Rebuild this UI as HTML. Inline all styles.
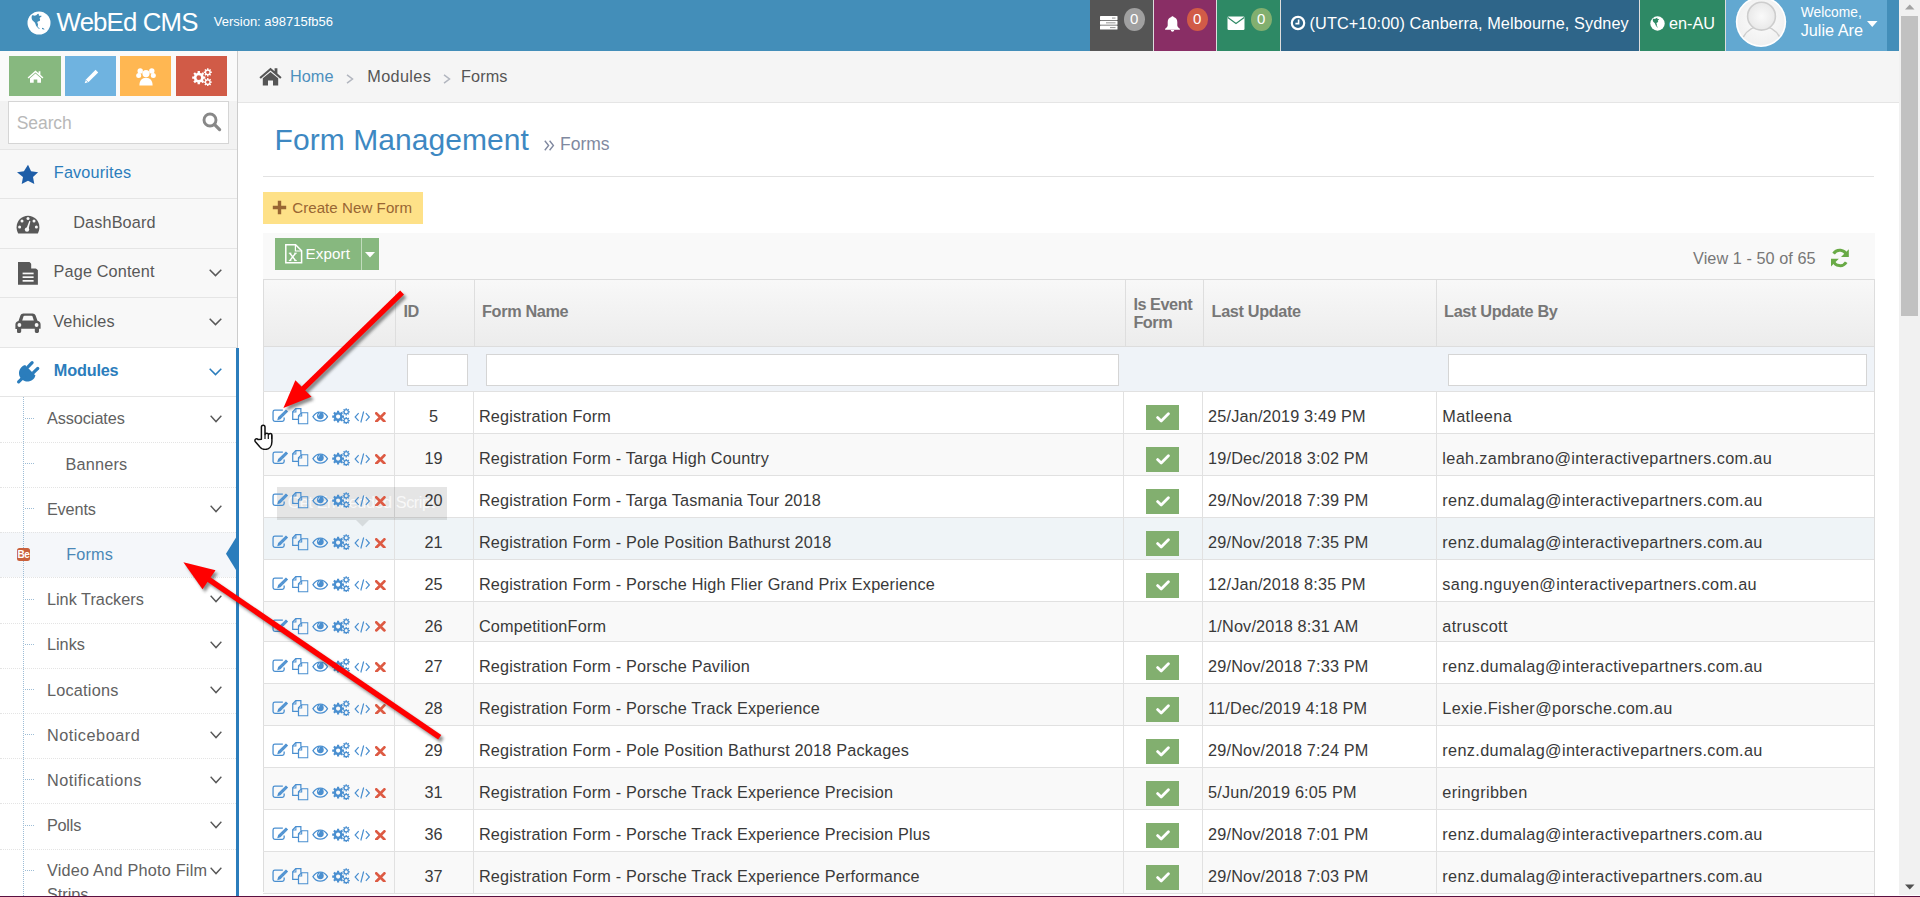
<!DOCTYPE html><html><head><meta charset="utf-8"><title>Forms</title><style>
*{margin:0;padding:0;box-sizing:border-box}
html,body{width:1920px;height:897px;overflow:hidden;background:#fff;font-family:"Liberation Sans",sans-serif}
.a{position:absolute}
.t{position:absolute;white-space:nowrap;line-height:1.15}
</style></head><body>
<svg width="0" height="0" style="position:absolute">
<defs>
<symbol id="i-edit" viewBox="0 0 16 13"><path d="M10.6 1.2H2.6C1.6 1.2 0.8 2 0.8 3V10.5C0.8 11.5 1.6 12.3 2.6 12.3H10.1C11.1 12.3 11.9 11.5 11.9 10.5V8.6" fill="none" stroke="#4a8fd0" stroke-width="1.3"/><path d="M13.7 0.4L15.9 2.6 8.2 10.3 5 11.2 5.9 8z" fill="#4a8fd0"/><path d="M7 8.2L13.9 1.3M8 9.2L14.9 2.3" stroke="#fff" stroke-width="0.35" stroke-dasharray="0.8 0.8" opacity="0.7"/></symbol>
<symbol id="i-copy" viewBox="0 0 16 16"><path d="M8.6 4.6V0.7H3.6L0.7 3.6V11H6.1" fill="none" stroke="#4a8fd0" stroke-width="1.2"/><path d="M0.7 3.8H3.8V0.7" fill="none" stroke="#4a8fd0" stroke-width="1"/><path d="M15.4 4.6H9.2L6.3 7.5V15.4H15.4z" fill="none" stroke="#4a8fd0" stroke-width="1.2"/><path d="M6.3 7.7H9.4V4.6" fill="none" stroke="#4a8fd0" stroke-width="1"/></symbol>
<symbol id="i-eye" viewBox="0 0 16 11"><path d="M0.7 5.6C2.5 2.6 5 1 8 1s5.5 1.6 7.3 4.6C13.5 8.6 11 10.2 8 10.2S2.5 8.6 0.7 5.6z" fill="none" stroke="#4a8fd0" stroke-width="1.25"/><circle cx="8.1" cy="4.8" r="3.4" fill="#4a8fd0"/><path d="M6.2 4.6C6.2 3.6 6.8 2.9 7.7 2.7" stroke="#fff" stroke-width="0.8" fill="none"/></symbol>
<symbol id="i-cogs" viewBox="0 0 18 16"><path d="M10.47 7.53 L12.01 7.55 L12.01 9.65 L10.47 9.67 L9.95 10.94 L11.02 12.03 L9.53 13.52 L8.44 12.45 L7.17 12.97 L7.15 14.51 L5.05 14.51 L5.03 12.97 L3.76 12.45 L2.67 13.52 L1.18 12.03 L2.25 10.94 L1.73 9.67 L0.19 9.65 L0.19 7.55 L1.73 7.53 L2.25 6.26 L1.18 5.17 L2.67 3.68 L3.76 4.75 L5.03 4.23 L5.05 2.69 L7.15 2.69 L7.17 4.23 L8.44 4.75 L9.53 3.68 L11.02 5.17 L9.95 6.26ZM8.20 8.60A2.1 2.1 0 1 0 4.00 8.60A2.1 2.1 0 1 0 8.20 8.60ZM16.82 3.16 L17.84 3.15 L17.84 4.45 L16.82 4.44 L16.51 5.20 L17.24 5.92 L16.32 6.84 L15.60 6.11 L14.84 6.42 L14.85 7.44 L13.55 7.44 L13.56 6.42 L12.80 6.11 L12.08 6.84 L11.16 5.92 L11.89 5.20 L11.58 4.44 L10.56 4.45 L10.56 3.15 L11.58 3.16 L11.89 2.40 L11.16 1.68 L12.08 0.76 L12.80 1.49 L13.56 1.18 L13.55 0.16 L14.85 0.16 L14.84 1.18 L15.60 1.49 L16.32 0.76 L17.24 1.68 L16.51 2.40ZM15.70 3.80A1.5 1.5 0 1 0 12.70 3.80A1.5 1.5 0 1 0 15.70 3.80ZM16.82 11.96 L17.84 11.95 L17.84 13.25 L16.82 13.24 L16.51 14.00 L17.24 14.72 L16.32 15.64 L15.60 14.91 L14.84 15.22 L14.85 16.24 L13.55 16.24 L13.56 15.22 L12.80 14.91 L12.08 15.64 L11.16 14.72 L11.89 14.00 L11.58 13.24 L10.56 13.25 L10.56 11.95 L11.58 11.96 L11.89 11.20 L11.16 10.48 L12.08 9.56 L12.80 10.29 L13.56 9.98 L13.55 8.96 L14.85 8.96 L14.84 9.98 L15.60 10.29 L16.32 9.56 L17.24 10.48 L16.51 11.20ZM15.70 12.60A1.5 1.5 0 1 0 12.70 12.60A1.5 1.5 0 1 0 15.70 12.60Z" fill="#4a8fd0" fill-rule="evenodd"/></symbol>
<symbol id="i-cogs-w" viewBox="0 0 18 16"><path d="M10.47 7.53 L12.01 7.55 L12.01 9.65 L10.47 9.67 L9.95 10.94 L11.02 12.03 L9.53 13.52 L8.44 12.45 L7.17 12.97 L7.15 14.51 L5.05 14.51 L5.03 12.97 L3.76 12.45 L2.67 13.52 L1.18 12.03 L2.25 10.94 L1.73 9.67 L0.19 9.65 L0.19 7.55 L1.73 7.53 L2.25 6.26 L1.18 5.17 L2.67 3.68 L3.76 4.75 L5.03 4.23 L5.05 2.69 L7.15 2.69 L7.17 4.23 L8.44 4.75 L9.53 3.68 L11.02 5.17 L9.95 6.26ZM8.20 8.60A2.1 2.1 0 1 0 4.00 8.60A2.1 2.1 0 1 0 8.20 8.60ZM16.82 3.16 L17.84 3.15 L17.84 4.45 L16.82 4.44 L16.51 5.20 L17.24 5.92 L16.32 6.84 L15.60 6.11 L14.84 6.42 L14.85 7.44 L13.55 7.44 L13.56 6.42 L12.80 6.11 L12.08 6.84 L11.16 5.92 L11.89 5.20 L11.58 4.44 L10.56 4.45 L10.56 3.15 L11.58 3.16 L11.89 2.40 L11.16 1.68 L12.08 0.76 L12.80 1.49 L13.56 1.18 L13.55 0.16 L14.85 0.16 L14.84 1.18 L15.60 1.49 L16.32 0.76 L17.24 1.68 L16.51 2.40ZM15.70 3.80A1.5 1.5 0 1 0 12.70 3.80A1.5 1.5 0 1 0 15.70 3.80ZM16.82 11.96 L17.84 11.95 L17.84 13.25 L16.82 13.24 L16.51 14.00 L17.24 14.72 L16.32 15.64 L15.60 14.91 L14.84 15.22 L14.85 16.24 L13.55 16.24 L13.56 15.22 L12.80 14.91 L12.08 15.64 L11.16 14.72 L11.89 14.00 L11.58 13.24 L10.56 13.25 L10.56 11.95 L11.58 11.96 L11.89 11.20 L11.16 10.48 L12.08 9.56 L12.80 10.29 L13.56 9.98 L13.55 8.96 L14.85 8.96 L14.84 9.98 L15.60 10.29 L16.32 9.56 L17.24 10.48 L16.51 11.20ZM15.70 12.60A1.5 1.5 0 1 0 12.70 12.60A1.5 1.5 0 1 0 15.70 12.60Z" fill="#fff" fill-rule="evenodd"/></symbol>
<symbol id="i-code" viewBox="0 0 16 12"><path d="M4.4 2.2L0.9 6l3.5 3.8M11.6 2.2L15.1 6l-3.5 3.8M9.4 0.5L6.6 11.5" fill="none" stroke="#4a8fd0" stroke-width="1.2"/></symbol>
<symbol id="i-x" viewBox="0 0 11 11"><path d="M1.4 1.4L9.6 9.6M9.6 1.4L1.4 9.6" stroke="#dd5a43" stroke-width="2.8" stroke-linecap="square"/></symbol>
<symbol id="i-chev" viewBox="0 0 13 8"><path d="M0.7 0.7L6.5 6.6 12.3 0.7" fill="none" stroke="#585858" stroke-width="1.5"/></symbol>
<symbol id="i-check" viewBox="0 0 14 11"><path d="M1.6 5.6L5.2 9 12.4 1.8" fill="none" stroke="#fff" stroke-width="2.8" stroke-linecap="round" stroke-linejoin="round"/></symbol>
</defs></svg>
<div class="a" style="left:0px;top:0px;width:1899px;height:51px;background:#438eb9"></div>
<svg class="a" style="left:27px;top:11px;" width="24" height="24" viewBox="0 0 24 24"><circle cx="12" cy="12" r="11.5" fill="#fff"/><path d="M5 4.5c1.5-0.5 2.5 0.5 3.5 0 1-0.3 1.5-1.5 3-1.8 0.8 0.5-0.2 1.5 0.6 2 1 0.4 1.8-0.4 2.6 0.3-0.3 1-1.6 1-2 2-0.2 1 0.8 1.6 0.3 2.5-0.6 1-2 0.6-2.6 1.5-0.3 0.8 0.6 1.6 0.6 2.5 0.1 0.8-0.5 1.4-0.2 2.2 0.4 0.9 1.6 1.3 2 2.2-1.2-0.2-2-1.2-2.8-2-0.9-0.9-1.3-2-1.6-3.2C7.8 11 6.3 10.4 5.4 9.3 4.6 8.2 4.3 6 5 4.5zM15 16.8c1.2 0.1 2 0.8 2.6 1.5-0.8 0.3-1.8 0.2-2.6-0.3z" fill="#438eb9"/></svg>
<div class="t " style="left:56.60px;top:8.13px;font-size:25.8px;color:#fff;font-weight:normal;letter-spacing:-0.85px">WebEd CMS</div>
<div class="t " style="left:213.75px;top:14.82px;font-size:13px;color:#fff;font-weight:normal;">Version: a98715fb56</div>
<div class="a" style="left:1090px;top:0px;width:63px;height:51px;background:#555"></div>
<div class="a" style="left:1153px;top:0px;width:1px;height:51px;background:#ddd"></div>
<div class="a" style="left:1154px;top:0px;width:62px;height:51px;background:#892e65"></div>
<div class="a" style="left:1216px;top:0px;width:1px;height:51px;background:#ddd"></div>
<div class="a" style="left:1217px;top:0px;width:63px;height:51px;background:#2e8965"></div>
<div class="a" style="left:1280px;top:0px;width:1px;height:51px;background:#ddd"></div>
<div class="a" style="left:1281px;top:0px;width:358px;height:51px;background:#2e6589"></div>
<div class="a" style="left:1639px;top:0px;width:1px;height:51px;background:#ddd"></div>
<div class="a" style="left:1640px;top:0px;width:85px;height:51px;background:#2e8965"></div>
<div class="a" style="left:1725px;top:0px;width:1px;height:51px;background:#ddd"></div>
<div class="a" style="left:1726px;top:0px;width:161px;height:51px;background:#62a8d1"></div>
<svg class="a" style="left:1100px;top:16px;" width="18" height="14" viewBox="0 0 18 14"><g fill="#fff"><rect x="0" y="0" width="17.5" height="4" rx="0.6"/><rect x="0" y="4.8" width="17.5" height="4" rx="0.6"/><rect x="0" y="9.6" width="17.5" height="4" rx="0.6"/></g><g fill="#888"><rect x="12" y="1.6" width="3.5" height="0.9"/><rect x="6" y="6.4" width="9.5" height="0.9"/><rect x="10" y="11.2" width="5.5" height="0.9"/></g></svg>
<div class="a" style="left:1123.7px;top:7.8px;width:21.4px;height:23px;background:#a0a0a0;border-radius:50%"></div>
<div class="t " style="left:1130.00px;top:10.38px;font-size:15px;color:#fff;font-weight:normal;">0</div>
<div class="a" style="left:1186.8px;top:7.8px;width:21.4px;height:23px;background:#d15b47;border-radius:50%"></div>
<div class="t " style="left:1193.10px;top:10.38px;font-size:15px;color:#fff;font-weight:normal;">0</div>
<div class="a" style="left:1250.8px;top:7.8px;width:21.4px;height:23px;background:#82af6f;border-radius:50%"></div>
<div class="t " style="left:1257.10px;top:10.38px;font-size:15px;color:#fff;font-weight:normal;">0</div>
<svg class="a" style="left:1164px;top:15px;" width="17" height="17" viewBox="0 0 17 17"><path d="M8.5 1.2c0.7 0 1.1 0.4 1.1 0.9 2.4 0.5 3.7 2.4 3.7 5v3.2c0 1.4 1 2.3 2.6 3.5v0.9H1.1v-0.9c1.6-1.2 2.6-2.1 2.6-3.5V7.1c0-2.6 1.3-4.5 3.7-5 0-0.5 0.4-0.9 1.1-0.9zM6.8 15.1h3.4c0 1-0.8 1.7-1.7 1.7s-1.7-0.7-1.7-1.7z" fill="#fff"/></svg>
<svg class="a" style="left:1227px;top:16px;" width="18" height="15" viewBox="0 0 18 15"><rect x="0.5" y="0.5" width="17" height="13.5" rx="1.2" fill="#fff"/><path d="M0.8 1.5L9 7.5 17.2 1.5" fill="none" stroke="#2e8965" stroke-width="1.1"/></svg>
<svg class="a" style="left:1290px;top:15px;" width="16" height="16" viewBox="0 0 16 16"><circle cx="8" cy="8" r="6.2" fill="none" stroke="#fff" stroke-width="2.2"/><path d="M8.6 4.5V8.6H5.4" fill="none" stroke="#fff" stroke-width="1.6"/></svg>
<div class="t " style="left:1309.60px;top:14.23px;font-size:16.25px;color:#fff;font-weight:normal;letter-spacing:0.09px">(UTC+10:00) Canberra, Melbourne, Sydney</div>
<svg class="a" style="left:1650px;top:15.8px;" width="15" height="15" viewBox="0 0 15 15"><circle cx="7.5" cy="7.5" r="7.2" fill="#fff"/><path d="M3 2.8c1-0.3 1.6 0.3 2.3 0 0.6-0.2 1-1 1.9-1.1 0.5 0.3-0.1 1 0.4 1.3 0.6 0.3 1.1-0.3 1.6 0.2-0.2 0.6-1 0.6-1.3 1.3-0.1 0.6 0.5 1 0.2 1.6-0.4 0.6-1.3 0.4-1.6 1-0.2 0.5 0.4 1 0.4 1.6 0 0.5-0.3 0.9-0.1 1.4 0.3 0.6 1 0.8 1.3 1.4-0.8-0.1-1.3-0.8-1.8-1.3-0.6-0.6-0.8-1.3-1-2C4.8 6.9 3.9 6.5 3.3 5.8 2.8 5.1 2.6 3.8 3 2.8z" fill="#2e8965"/></svg>
<div class="t " style="left:1668.90px;top:14.03px;font-size:16.25px;color:#fff;font-weight:normal;">en-AU</div>
<svg class="a" style="left:1735px;top:-4px;" width="52" height="52" viewBox="0 0 52 52"><defs><radialGradient id="avg" cx="0.5" cy="0.45" r="0.55"><stop offset="0" stop-color="#fdfdfd"/><stop offset="1" stop-color="#f0f0f0"/></radialGradient><radialGradient id="avh" cx="0.5" cy="0.5" r="0.5"><stop offset="0" stop-color="#fafafa"/><stop offset="1" stop-color="#e9e9e9"/></radialGradient><clipPath id="avc"><circle cx="26" cy="25.8" r="23.6"/></clipPath></defs><circle cx="26" cy="25.8" r="25.2" fill="#fff"/><circle cx="26" cy="25.8" r="23.6" fill="url(#avg)"/><g clip-path="url(#avc)"><path d="M8.2 41.2A20.6 20.6 0 0 1 44.8 41.2" fill="none" stroke="#cdcdcd" stroke-width="1.6"/><circle cx="26.5" cy="20.2" r="13.9" fill="url(#avh)" stroke="#cdcdcd" stroke-width="1.6"/></g></svg>
<div class="t " style="left:1800.70px;top:4.78px;font-size:13.8px;color:#fff;font-weight:normal;">Welcome,</div>
<div class="t " style="left:1800.70px;top:21.23px;font-size:16.25px;color:#fff;font-weight:normal;">Julie Are</div>
<svg class="a" style="left:1867px;top:20.8px;" width="11" height="6" viewBox="0 0 11 6"><path d="M0 0H10.5L5.25 6z" fill="#fff"/></svg>
<div class="a" style="left:0px;top:51px;width:237px;height:845px;background:#fff"></div>
<div class="a" style="left:237px;top:51px;width:1px;height:845px;background:#ccc"></div>
<div class="a" style="left:0px;top:51px;width:237px;height:50px;background:#fafafa"></div>
<div class="a" style="left:9px;top:56px;width:52px;height:40px;background:#87b87f"></div>
<div class="a" style="left:65px;top:56px;width:51px;height:40px;background:#6fb3e0"></div>
<div class="a" style="left:120px;top:56px;width:51px;height:40px;background:#ffb752"></div>
<div class="a" style="left:176px;top:56px;width:51px;height:40px;background:#d15b47"></div>
<svg class="a" style="left:27px;top:69.5px;" width="17" height="13" viewBox="0 0 17 13"><path d="M8.5 0.6L0.6 7.4 1.6 8.4 8.5 2.5 15.4 8.4 16.4 7.4 13.4 4.8V1.2H11.6V3.3z" fill="#fff"/><path d="M3 8.2L8.5 3.6 14 8.2V12.8H10.3V9.4H6.7V12.8H3z" fill="#fff"/></svg>
<svg class="a" style="left:82.5px;top:68.5px;" width="16" height="16" viewBox="0 0 16 16"><path d="M12.6 0.8l2.6 2.6-9.6 9.6-3.9 1.3 1.3-3.9z" fill="#fff"/><path d="M3.2 11.3l1.5 1.5" stroke="#6fb3e0" stroke-width="0.9"/></svg>
<svg class="a" style="left:136px;top:67px;" width="20" height="19" viewBox="0 0 20 19"><g fill="#fff"><circle cx="4.2" cy="4" r="2.7"/><circle cx="15.8" cy="4" r="2.7"/><circle cx="10" cy="6.6" r="3.6"/><circle cx="2.7" cy="8.6" r="2.5"/><circle cx="17.3" cy="8.6" r="2.5"/><path d="M3.4 18.6c0-5 2.4-7.8 6.6-7.8s6.6 2.8 6.6 7.8z"/></g></svg>
<svg class="a" style="left:192px;top:67.5px;" width="20" height="18" viewBox="0 0 20 18"><use href="#i-cogs-w" width="20" height="18"/></svg>
<div class="a" style="left:0px;top:101px;width:237px;height:48.5px;background:#f2f2f2"></div>
<div class="a" style="left:8.3px;top:101.3px;width:220.7px;height:42.4px;background:#fff;border:1px solid #d5d5d5"></div>
<div class="t " style="left:16.80px;top:113.17px;font-size:17.5px;color:#b8b8b8;font-weight:normal;letter-spacing:-0.1px">Search</div>
<svg class="a" style="left:202px;top:111.5px;" width="20" height="20" viewBox="0 0 20 20"><circle cx="8" cy="8" r="6" fill="none" stroke="#888" stroke-width="2.9"/><path d="M12.4 12.4L17.6 17.6" stroke="#888" stroke-width="3.2" stroke-linecap="round"/></svg>
<div class="a" style="left:0px;top:149px;width:237px;height:1px;background:#e5e5e5"></div>
<div class="a" style="left:0px;top:150px;width:237px;height:48px;background:#f8f8f8"></div>
<div class="a" style="left:0px;top:198px;width:237px;height:1px;background:#e5e5e5"></div>
<div class="a" style="left:0px;top:199px;width:237px;height:49px;background:#f8f8f8"></div>
<div class="a" style="left:0px;top:248px;width:237px;height:1px;background:#e5e5e5"></div>
<div class="a" style="left:0px;top:249px;width:237px;height:48px;background:#f8f8f8"></div>
<div class="a" style="left:0px;top:297px;width:237px;height:1px;background:#e5e5e5"></div>
<div class="a" style="left:0px;top:298px;width:237px;height:49px;background:#f8f8f8"></div>
<div class="a" style="left:0px;top:347px;width:237px;height:1px;background:#e5e5e5"></div>
<svg class="a" style="left:17px;top:163.5px;" width="22" height="21" viewBox="0 0 22 21"><path d="M11 0.8l3.1 6.5 7 0.9-5.1 4.9 1.3 7-6.3-3.4-6.3 3.4 1.3-7L-0.1 8.2l7-0.9z" fill="#1e5ea8"/></svg>
<div class="t " style="left:53.80px;top:162.83px;font-size:16.25px;color:#2b7dbc;font-weight:normal;letter-spacing:0.16px">Favourites</div>
<svg class="a" style="left:16.4px;top:215px;" width="24" height="19" viewBox="0 0 24 19"><path d="M12 0.8C5.6 0.8 0.6 5.8 0.6 12.2c0 2.2 0.6 4.4 1.6 6.2h19.6c1-1.8 1.6-4 1.6-6.2C23.4 5.8 18.4 0.8 12 0.8z" fill="#585858"/><g fill="#f8f8f8"><circle cx="12" cy="3.6" r="1.5"/><circle cx="6" cy="6" r="1.5"/><circle cx="18" cy="6" r="1.5"/><circle cx="3.6" cy="12" r="1.5"/><circle cx="20.4" cy="12" r="1.5"/><circle cx="11" cy="14.6" r="2.2"/><path d="M10.2 14L13.4 5.8 14.4 6.2 12.4 14.8z"/></g></svg>
<div class="t " style="left:73.20px;top:213.13px;font-size:16.25px;color:#585858;font-weight:normal;letter-spacing:0.13px">DashBoard</div>
<svg class="a" style="left:17.8px;top:262px;" width="20" height="23" viewBox="0 0 20 23"><path d="M0 0H11.5L19.9 8.2V22.8H0z" fill="#585858"/><path d="M13.2 0.3L19.6 6.6H13.2z" fill="#f8f8f8"/><g fill="#f8f8f8"><rect x="4.6" y="10.6" width="11" height="1.7"/><rect x="4.6" y="14.3" width="11" height="1.7"/><rect x="4.6" y="18" width="11" height="1.7"/></g></svg>
<div class="t " style="left:53.60px;top:261.63px;font-size:16.25px;color:#585858;font-weight:normal;letter-spacing:0.13px">Page Content</div>
<svg class="a" style="left:209px;top:268.5px;" width="13" height="8" viewBox="0 0 13 8"><use href="#i-chev"/></svg>
<svg class="a" style="left:15px;top:312.9px;" width="26" height="20.5" viewBox="0 0 26 20.5"><path d="M5.4 2.6C5.9 1.1 7 0.4 8.4 0.4h9.2c1.4 0 2.5 0.7 3 2.2l1.9 5.2c1.9 0.4 3.1 1.7 3.1 3.6v4.4h-1.6v2.4c0 1-0.8 1.8-1.8 1.8h-0.6c-1 0-1.8-0.8-1.8-1.8v-2.4H6.2v2.4c0 1-0.8 1.8-1.8 1.8H3.8C2.8 20.2 2 19.4 2 18.4v-2.4H0.4v-4.4c0-1.9 1.2-3.2 3.1-3.6z" fill="#585858"/><path d="M7.2 7.6L8.5 3.6c0.2-0.6 0.6-0.9 1.2-0.9h6.6c0.6 0 1 0.3 1.2 0.9l1.3 4z" fill="#f8f8f8"/><circle cx="4.4" cy="12" r="1.9" fill="#f8f8f8"/><circle cx="21.6" cy="12" r="1.9" fill="#f8f8f8"/></svg>
<div class="t " style="left:53.30px;top:311.63px;font-size:16.25px;color:#585858;font-weight:normal;letter-spacing:0.1px">Vehicles</div>
<svg class="a" style="left:209px;top:318.2px;" width="13" height="8" viewBox="0 0 13 8"><use href="#i-chev"/></svg>
<div class="a" style="left:0px;top:348px;width:237px;height:48px;background:#fff"></div>
<div class="a" style="left:0px;top:396px;width:237px;height:1px;background:#e5e5e5"></div>
<svg class="a" style="left:10px;top:355px;" width="36" height="36" viewBox="0 0 36 36"><g transform="translate(19.85,15.65) rotate(45)" fill="#2b7dbc"><path d="M-7.3 -1.2H7.3A8.4 8.4 0 1 1 -7.3 -1.2z" transform="translate(0,0.6)"/><rect x="-5.6" y="-8.8" width="3.2" height="9" rx="1.6"/><rect x="2.4" y="-8.8" width="3.2" height="9" rx="1.6"/><rect x="-1.6" y="6" width="3.2" height="11.5" rx="1.6"/></g></svg>
<div class="t " style="left:53.80px;top:360.73px;font-size:16.25px;color:#2b7dbc;font-weight:bold;letter-spacing:-0.18px">Modules</div>
<svg class="a" style="left:209px;top:367.5px" width="13" height="8"><path d="M0.7 0.7L6.5 6.6 12.3 0.7" fill="none" stroke="#2b7dbc" stroke-width="1.5"/></svg>
<div class="t " style="left:46.90px;top:409.43px;font-size:16.25px;color:#616161;font-weight:normal;letter-spacing:-0.06px">Associates</div>
<div class="a" style="left:25px;top:417.8px;width:9px;height:0;border-top:1px dotted #9dbdd6"></div>
<svg class="a" style="left:209.5px;top:414.5px" width="12" height="8" viewBox="0 0 13 8" preserveAspectRatio="none"><use href="#i-chev"/></svg>
<div class="a" style="left:0;top:441.8px;width:236px;height:0;border-top:1px dotted #e4e4e4"></div>
<div class="a" style="left:25px;top:463.0px;width:9px;height:0;border-top:1px dotted #9dbdd6"></div>
<div class="t " style="left:65.50px;top:454.63px;font-size:16.25px;color:#616161;font-weight:normal;letter-spacing:0.19px">Banners</div>
<div class="a" style="left:0;top:487.0px;width:236px;height:0;border-top:1px dotted #e4e4e4"></div>
<div class="t " style="left:46.90px;top:499.83px;font-size:16.25px;color:#616161;font-weight:normal;letter-spacing:-0.13px">Events</div>
<div class="a" style="left:25px;top:508.2px;width:9px;height:0;border-top:1px dotted #9dbdd6"></div>
<svg class="a" style="left:209.5px;top:504.9px" width="12" height="8" viewBox="0 0 13 8" preserveAspectRatio="none"><use href="#i-chev"/></svg>
<div class="a" style="left:0px;top:532.2px;width:236px;height:45.2px;background:#f5f7fa"></div>
<div class="a" style="left:0;top:532.2px;width:236px;height:0;border-top:1px dotted #e4e4e4"></div>
<div class="t " style="left:66.25px;top:545.03px;font-size:16.25px;color:#4b88b7;font-weight:normal;letter-spacing:0.16px">Forms</div>
<div class="a" style="left:0;top:577.4px;width:236px;height:0;border-top:1px dotted #e4e4e4"></div>
<div class="t " style="left:46.90px;top:590.23px;font-size:16.25px;color:#616161;font-weight:normal;letter-spacing:0.03px">Link Trackers</div>
<div class="a" style="left:25px;top:598.6px;width:9px;height:0;border-top:1px dotted #9dbdd6"></div>
<svg class="a" style="left:209.5px;top:595.3px" width="12" height="8" viewBox="0 0 13 8" preserveAspectRatio="none"><use href="#i-chev"/></svg>
<div class="a" style="left:0;top:622.6px;width:236px;height:0;border-top:1px dotted #e4e4e4"></div>
<div class="t " style="left:46.90px;top:635.43px;font-size:16.25px;color:#616161;font-weight:normal;letter-spacing:0.02px">Links</div>
<div class="a" style="left:25px;top:643.8px;width:9px;height:0;border-top:1px dotted #9dbdd6"></div>
<svg class="a" style="left:209.5px;top:640.5px" width="12" height="8" viewBox="0 0 13 8" preserveAspectRatio="none"><use href="#i-chev"/></svg>
<div class="a" style="left:0;top:667.8px;width:236px;height:0;border-top:1px dotted #e4e4e4"></div>
<div class="t " style="left:46.90px;top:680.63px;font-size:16.25px;color:#616161;font-weight:normal;letter-spacing:0.23px">Locations</div>
<div class="a" style="left:25px;top:689.0px;width:9px;height:0;border-top:1px dotted #9dbdd6"></div>
<svg class="a" style="left:209.5px;top:685.7px" width="12" height="8" viewBox="0 0 13 8" preserveAspectRatio="none"><use href="#i-chev"/></svg>
<div class="a" style="left:0;top:713.0px;width:236px;height:0;border-top:1px dotted #e4e4e4"></div>
<div class="t " style="left:46.90px;top:725.83px;font-size:16.25px;color:#616161;font-weight:normal;letter-spacing:0.52px">Noticeboard</div>
<div class="a" style="left:25px;top:734.2px;width:9px;height:0;border-top:1px dotted #9dbdd6"></div>
<svg class="a" style="left:209.5px;top:730.9px" width="12" height="8" viewBox="0 0 13 8" preserveAspectRatio="none"><use href="#i-chev"/></svg>
<div class="a" style="left:0;top:758.2px;width:236px;height:0;border-top:1px dotted #e4e4e4"></div>
<div class="t " style="left:46.90px;top:771.03px;font-size:16.25px;color:#616161;font-weight:normal;letter-spacing:0.5px">Notifications</div>
<div class="a" style="left:25px;top:779.4px;width:9px;height:0;border-top:1px dotted #9dbdd6"></div>
<svg class="a" style="left:209.5px;top:776.1px" width="12" height="8" viewBox="0 0 13 8" preserveAspectRatio="none"><use href="#i-chev"/></svg>
<div class="a" style="left:0;top:803.4px;width:236px;height:0;border-top:1px dotted #e4e4e4"></div>
<div class="t " style="left:46.90px;top:816.23px;font-size:16.25px;color:#616161;font-weight:normal;letter-spacing:-0.2px">Polls</div>
<div class="a" style="left:25px;top:824.6px;width:9px;height:0;border-top:1px dotted #9dbdd6"></div>
<svg class="a" style="left:209.5px;top:821.3px" width="12" height="8" viewBox="0 0 13 8" preserveAspectRatio="none"><use href="#i-chev"/></svg>
<div class="a" style="left:0;top:848.6px;width:236px;height:0;border-top:1px dotted #e4e4e4"></div>
<div class="t " style="left:46.90px;top:861.43px;font-size:16.25px;color:#616161;font-weight:normal;letter-spacing:0.22px">Video And Photo Film</div>
<div class="a" style="left:25px;top:869.8px;width:9px;height:0;border-top:1px dotted #9dbdd6"></div>
<svg class="a" style="left:209.5px;top:866.5px" width="12" height="8" viewBox="0 0 13 8" preserveAspectRatio="none"><use href="#i-chev"/></svg>
<div class="t " style="left:46.90px;top:884.93px;font-size:16.25px;color:#616161;font-weight:normal;">Strips</div>
<div class="a" style="left:23px;top:397px;width:0;height:499px;border-left:1px dotted #9dbdd6"></div>
<div class="a" style="left:16.9px;top:548px;width:13.2px;height:13.2px;background:#c9603b;border-radius:2.5px"></div>
<div class="t" style="left:17.6px;top:548.6px;font-size:10px;line-height:12px;color:#fff;font-weight:bold;letter-spacing:-0.6px">Be</div>
<div class="a" style="left:236px;top:347.5px;width:3px;height:549px;background:#2b7dbc"></div>
<svg class="a" style="left:226px;top:535.6px;" width="11" height="35.6" viewBox="0 0 11 35.6"><path d="M11 0L0 17.8 11 35.6z" fill="#2b7dbc"/></svg>
<div class="a" style="left:238px;top:51px;width:1661px;height:51px;background:#f5f5f5"></div>
<div class="a" style="left:238px;top:102px;width:1661px;height:1px;background:#e5e5e5"></div>
<svg class="a" style="left:259px;top:66.5px;" width="23" height="19" viewBox="0 0 23 19"><path d="M11.5 0.8L0.4 10.2 1.8 11.8 11.5 3.6 21.2 11.8 22.6 10.2 18.4 6.6V1.2H15.6V4.2z" fill="#555"/><path d="M3.8 11.3L11.5 4.9 19.2 11.3V18.4H14V13.4H9V18.4H3.8z" fill="#555"/></svg>
<div class="t " style="left:289.90px;top:66.63px;font-size:16.25px;color:#4c8fbd;font-weight:normal;letter-spacing:0.1px">Home</div>
<svg class="a" style="left:345.5px;top:73.5px;" width="8" height="10" viewBox="0 0 8 10"><path d="M1 0.8L6.5 5 1 9.2" fill="none" stroke="#b2b6bf" stroke-width="1.5"/></svg>
<div class="t " style="left:367.25px;top:66.63px;font-size:16.25px;color:#555;font-weight:normal;letter-spacing:0.35px">Modules</div>
<svg class="a" style="left:443px;top:73.5px;" width="8" height="10" viewBox="0 0 8 10"><path d="M1 0.8L6.5 5 1 9.2" fill="none" stroke="#b2b6bf" stroke-width="1.5"/></svg>
<div class="t " style="left:461.00px;top:66.63px;font-size:16.25px;color:#555;font-weight:normal;letter-spacing:0.1px">Forms</div>
<div class="t " style="left:274.60px;top:122.95px;font-size:30px;color:#3d88c2;font-weight:normal;letter-spacing:0.05px">Form Management</div>
<svg class="a" style="left:544px;top:139.5px;" width="11" height="11" viewBox="0 0 11 11"><path d="M0.8 0.8L4.6 5.5 0.8 10.2M5.6 0.8L9.4 5.5 5.6 10.2" fill="none" stroke="#8089a0" stroke-width="1.4"/></svg>
<div class="t " style="left:560.00px;top:134.47px;font-size:17.5px;color:#8089a0;font-weight:normal;">Forms</div>
<div class="a" style="left:263px;top:176px;width:1611px;height:1px;background:#e2e2e2"></div>
<div class="a" style="left:263px;top:192px;width:160px;height:32px;background:#fee188"></div>
<svg class="a" style="left:272.4px;top:200px;" width="15" height="15" viewBox="0 0 15 15"><path d="M7.5 0.8V14.2M0.8 7.5H14.2" stroke="#996633" stroke-width="3.4"/></svg>
<div class="t " style="left:292.20px;top:199.19px;font-size:15.1px;color:#996633;font-weight:normal;letter-spacing:0.05px">Create New Form</div>
<div class="a" style="left:263px;top:233px;width:1612px;height:46px;background:#f9f9f9"></div>
<div class="a" style="left:275px;top:238px;width:86px;height:32px;background:#87b87f"></div>
<div class="a" style="left:361px;top:238px;width:1.3px;height:32px;background:#c2dcbd"></div>
<div class="a" style="left:362px;top:238px;width:17px;height:32px;background:#87b87f"></div>
<svg class="a" style="left:284.5px;top:243.5px;" width="18" height="20" viewBox="0 0 18 20"><path d="M0.8 0.8H10.6L16.6 6.8V18.8H0.8z" fill="none" stroke="#fff" stroke-width="1.5"/><path d="M10.4 1V7H16.4" fill="none" stroke="#fff" stroke-width="1.2"/><path d="M4.8 9.2L10.6 16.6M10.6 9.2L4.8 16.6" stroke="#fff" stroke-width="1.4"/><path d="M3.8 9.2H6.4M9.2 9.2H11.8M3.8 16.6H6.4M9.2 16.6H11.8" stroke="#fff" stroke-width="1"/></svg>
<div class="t " style="left:305.60px;top:244.59px;font-size:15.2px;color:#fff;font-weight:normal;letter-spacing:0.1px">Export</div>
<svg class="a" style="left:365.4px;top:251.5px;" width="10" height="6" viewBox="0 0 10 6"><path d="M0 0H10L5 5.6z" fill="#fff"/></svg>
<div class="t " style="left:1693.10px;top:249.03px;font-size:16.25px;color:#777;font-weight:normal;letter-spacing:0.05px">View 1 - 50 of 65</div>
<svg class="a" style="left:1830px;top:247.5px;" width="20" height="20" viewBox="0 0 20 20"><path d="M16.6 7.2A7.2 7.2 0 0 0 3.6 5.6" fill="none" stroke="#69aa46" stroke-width="3"/><path d="M18.8 1.2V9H11z" fill="#69aa46"/><path d="M3.2 12.6A7.2 7.2 0 0 0 16.2 14.2" fill="none" stroke="#69aa46" stroke-width="3"/><path d="M1 18.6V10.8H8.8z" fill="#69aa46"/></svg>
<div class="a" style="left:263px;top:279px;width:1611px;height:1px;background:#ddd"></div>
<div class="a" style="left:263px;top:280px;width:1611px;height:66px;background:linear-gradient(#f8f8f8,#ececec)"></div>
<div class="a" style="left:263px;top:279px;width:1px;height:613px;background:#ddd"></div>
<div class="a" style="left:1874px;top:279px;width:1px;height:617px;background:#ddd"></div>
<div class="a" style="left:395px;top:280px;width:1px;height:66px;background:#dedede"></div>
<div class="a" style="left:474px;top:280px;width:1px;height:66px;background:#dedede"></div>
<div class="a" style="left:1125px;top:280px;width:1px;height:66px;background:#dedede"></div>
<div class="a" style="left:1203px;top:280px;width:1px;height:66px;background:#dedede"></div>
<div class="a" style="left:1436px;top:280px;width:1px;height:66px;background:#dedede"></div>
<div class="a" style="left:263px;top:346px;width:1611px;height:1px;background:#ddd"></div>
<div class="t " style="left:403.40px;top:302.43px;font-size:16.25px;color:#777;font-weight:bold;letter-spacing:-0.3px">ID</div>
<div class="t " style="left:482.00px;top:302.43px;font-size:16.25px;color:#777;font-weight:bold;letter-spacing:-0.35px">Form Name</div>
<div class="t " style="left:1133.40px;top:295.23px;font-size:16.25px;color:#777;font-weight:bold;letter-spacing:-0.45px">Is Event</div>
<div class="t " style="left:1133.40px;top:312.83px;font-size:16.25px;color:#777;font-weight:bold;letter-spacing:-0.45px">Form</div>
<div class="t " style="left:1211.60px;top:302.43px;font-size:16.25px;color:#777;font-weight:bold;letter-spacing:-0.35px">Last Update</div>
<div class="t " style="left:1444.10px;top:302.43px;font-size:16.25px;color:#777;font-weight:bold;letter-spacing:-0.35px">Last Update By</div>
<div class="a" style="left:264px;top:347px;width:1610px;height:44px;background:#eff3f8"></div>
<div class="a" style="left:407px;top:354px;width:61px;height:32px;background:#fff;border:1px solid #d5d5d5"></div>
<div class="a" style="left:486px;top:354px;width:633px;height:32px;background:#fff;border:1px solid #d5d5d5"></div>
<div class="a" style="left:1448px;top:354px;width:419px;height:32px;background:#fff;border:1px solid #d5d5d5"></div>
<div class="a" style="left:263px;top:391px;width:1611px;height:1px;background:#e1e1e1"></div>
<div class="a" style="left:264px;top:392px;width:1610px;height:41px;background:#fff"></div>
<div class="a" style="left:263px;top:433px;width:1611px;height:1px;background:#e1e1e1"></div>
<div class="a" style="left:394px;top:392px;width:1px;height:41px;background:#e1e1e1"></div>
<div class="a" style="left:473px;top:392px;width:1px;height:41px;background:#e1e1e1"></div>
<div class="a" style="left:1123px;top:392px;width:1px;height:41px;background:#e1e1e1"></div>
<div class="a" style="left:1202px;top:392px;width:1px;height:41px;background:#e1e1e1"></div>
<div class="a" style="left:1436px;top:392px;width:1px;height:41px;background:#e1e1e1"></div>
<svg class="a" style="left:272px;top:409.3px" width="16.5" height="13"><use href="#i-edit"/></svg>
<svg class="a" style="left:292.3px;top:408.1px" width="16.5" height="16.5"><use href="#i-copy"/></svg>
<svg class="a" style="left:312.3px;top:410.9px" width="16.5" height="11"><use href="#i-eye"/></svg>
<svg class="a" style="left:332.3px;top:407.9px" width="18" height="16"><use href="#i-cogs"/></svg>
<svg class="a" style="left:354px;top:411.1px" width="16.5" height="12"><use href="#i-code"/></svg>
<svg class="a" style="left:375.4px;top:411.5px" width="10.8" height="10.8"><use href="#i-x"/></svg>
<div class="t" style="left:394px;width:79px;text-align:center;top:406.93px;font-size:16.25px;color:#393939">5</div>
<div class="t " style="left:478.90px;top:406.93px;font-size:16.25px;color:#393939;font-weight:normal;letter-spacing:0.18px">Registration Form</div>
<div class="a" style="left:1146px;top:405px;width:33px;height:25px;background:#82af6f"></div>
<svg class="a" style="left:1155.6px;top:411.5px" width="14" height="11"><use href="#i-check"/></svg>
<div class="t " style="left:1208.10px;top:406.93px;font-size:16.25px;color:#393939;font-weight:normal;letter-spacing:0.17px">25/Jan/2019 3:49 PM</div>
<div class="t " style="left:1442.30px;top:406.93px;font-size:16.25px;color:#393939;font-weight:normal;letter-spacing:0.36px">Matleena</div>
<div class="a" style="left:264px;top:434px;width:1610px;height:41px;background:#f9f9f9"></div>
<div class="a" style="left:263px;top:475px;width:1611px;height:1px;background:#e1e1e1"></div>
<div class="a" style="left:394px;top:434px;width:1px;height:41px;background:#e1e1e1"></div>
<div class="a" style="left:473px;top:434px;width:1px;height:41px;background:#e1e1e1"></div>
<div class="a" style="left:1123px;top:434px;width:1px;height:41px;background:#e1e1e1"></div>
<div class="a" style="left:1202px;top:434px;width:1px;height:41px;background:#e1e1e1"></div>
<div class="a" style="left:1436px;top:434px;width:1px;height:41px;background:#e1e1e1"></div>
<svg class="a" style="left:272px;top:451.3px" width="16.5" height="13"><use href="#i-edit"/></svg>
<svg class="a" style="left:292.3px;top:450.1px" width="16.5" height="16.5"><use href="#i-copy"/></svg>
<svg class="a" style="left:312.3px;top:452.9px" width="16.5" height="11"><use href="#i-eye"/></svg>
<svg class="a" style="left:332.3px;top:449.9px" width="18" height="16"><use href="#i-cogs"/></svg>
<svg class="a" style="left:354px;top:453.1px" width="16.5" height="12"><use href="#i-code"/></svg>
<svg class="a" style="left:375.4px;top:453.5px" width="10.8" height="10.8"><use href="#i-x"/></svg>
<div class="t" style="left:394px;width:79px;text-align:center;top:448.93px;font-size:16.25px;color:#393939">19</div>
<div class="t " style="left:478.90px;top:448.93px;font-size:16.25px;color:#393939;font-weight:normal;letter-spacing:0.18px">Registration Form - Targa High Country</div>
<div class="a" style="left:1146px;top:447px;width:33px;height:25px;background:#82af6f"></div>
<svg class="a" style="left:1155.6px;top:453.5px" width="14" height="11"><use href="#i-check"/></svg>
<div class="t " style="left:1208.10px;top:448.93px;font-size:16.25px;color:#393939;font-weight:normal;letter-spacing:0.17px">19/Dec/2018 3:02 PM</div>
<div class="t " style="left:1442.30px;top:448.93px;font-size:16.25px;color:#393939;font-weight:normal;letter-spacing:0.36px">leah.zambrano@interactivepartners.com.au</div>
<div class="a" style="left:264px;top:476px;width:1610px;height:41px;background:#fff"></div>
<div class="a" style="left:263px;top:517px;width:1611px;height:1px;background:#e1e1e1"></div>
<div class="a" style="left:394px;top:476px;width:1px;height:41px;background:#e1e1e1"></div>
<div class="a" style="left:473px;top:476px;width:1px;height:41px;background:#e1e1e1"></div>
<div class="a" style="left:1123px;top:476px;width:1px;height:41px;background:#e1e1e1"></div>
<div class="a" style="left:1202px;top:476px;width:1px;height:41px;background:#e1e1e1"></div>
<div class="a" style="left:1436px;top:476px;width:1px;height:41px;background:#e1e1e1"></div>
<div class="t " style="left:478.90px;top:490.93px;font-size:16.25px;color:#393939;font-weight:normal;letter-spacing:0.18px">Registration Form - Targa Tasmania Tour 2018</div>
<div class="a" style="left:1146px;top:489px;width:33px;height:25px;background:#82af6f"></div>
<svg class="a" style="left:1155.6px;top:495.5px" width="14" height="11"><use href="#i-check"/></svg>
<div class="t " style="left:1208.10px;top:490.93px;font-size:16.25px;color:#393939;font-weight:normal;letter-spacing:0.17px">29/Nov/2018 7:39 PM</div>
<div class="t " style="left:1442.30px;top:490.93px;font-size:16.25px;color:#393939;font-weight:normal;letter-spacing:0.36px">renz.dumalag@interactivepartners.com.au</div>
<div class="a" style="left:264px;top:518px;width:1610px;height:41px;background:#eff4f7"></div>
<div class="a" style="left:263px;top:559px;width:1611px;height:1px;background:#e1e1e1"></div>
<div class="a" style="left:394px;top:518px;width:1px;height:41px;background:#e1e1e1"></div>
<div class="a" style="left:473px;top:518px;width:1px;height:41px;background:#e1e1e1"></div>
<div class="a" style="left:1123px;top:518px;width:1px;height:41px;background:#e1e1e1"></div>
<div class="a" style="left:1202px;top:518px;width:1px;height:41px;background:#e1e1e1"></div>
<div class="a" style="left:1436px;top:518px;width:1px;height:41px;background:#e1e1e1"></div>
<svg class="a" style="left:272px;top:535.3px" width="16.5" height="13"><use href="#i-edit"/></svg>
<svg class="a" style="left:292.3px;top:534.1px" width="16.5" height="16.5"><use href="#i-copy"/></svg>
<svg class="a" style="left:312.3px;top:536.9px" width="16.5" height="11"><use href="#i-eye"/></svg>
<svg class="a" style="left:332.3px;top:533.9px" width="18" height="16"><use href="#i-cogs"/></svg>
<svg class="a" style="left:354px;top:537.1px" width="16.5" height="12"><use href="#i-code"/></svg>
<svg class="a" style="left:375.4px;top:537.5px" width="10.8" height="10.8"><use href="#i-x"/></svg>
<div class="t" style="left:394px;width:79px;text-align:center;top:532.93px;font-size:16.25px;color:#393939">21</div>
<div class="t " style="left:478.90px;top:532.93px;font-size:16.25px;color:#393939;font-weight:normal;letter-spacing:0.18px">Registration Form - Pole Position Bathurst 2018</div>
<div class="a" style="left:1146px;top:531px;width:33px;height:25px;background:#82af6f"></div>
<svg class="a" style="left:1155.6px;top:537.5px" width="14" height="11"><use href="#i-check"/></svg>
<div class="t " style="left:1208.10px;top:532.93px;font-size:16.25px;color:#393939;font-weight:normal;letter-spacing:0.17px">29/Nov/2018 7:35 PM</div>
<div class="t " style="left:1442.30px;top:532.93px;font-size:16.25px;color:#393939;font-weight:normal;letter-spacing:0.36px">renz.dumalag@interactivepartners.com.au</div>
<div class="a" style="left:264px;top:560px;width:1610px;height:41px;background:#fff"></div>
<div class="a" style="left:263px;top:601px;width:1611px;height:1px;background:#e1e1e1"></div>
<div class="a" style="left:394px;top:560px;width:1px;height:41px;background:#e1e1e1"></div>
<div class="a" style="left:473px;top:560px;width:1px;height:41px;background:#e1e1e1"></div>
<div class="a" style="left:1123px;top:560px;width:1px;height:41px;background:#e1e1e1"></div>
<div class="a" style="left:1202px;top:560px;width:1px;height:41px;background:#e1e1e1"></div>
<div class="a" style="left:1436px;top:560px;width:1px;height:41px;background:#e1e1e1"></div>
<svg class="a" style="left:272px;top:577.3px" width="16.5" height="13"><use href="#i-edit"/></svg>
<svg class="a" style="left:292.3px;top:576.1px" width="16.5" height="16.5"><use href="#i-copy"/></svg>
<svg class="a" style="left:312.3px;top:578.9px" width="16.5" height="11"><use href="#i-eye"/></svg>
<svg class="a" style="left:332.3px;top:575.9px" width="18" height="16"><use href="#i-cogs"/></svg>
<svg class="a" style="left:354px;top:579.1px" width="16.5" height="12"><use href="#i-code"/></svg>
<svg class="a" style="left:375.4px;top:579.5px" width="10.8" height="10.8"><use href="#i-x"/></svg>
<div class="t" style="left:394px;width:79px;text-align:center;top:574.93px;font-size:16.25px;color:#393939">25</div>
<div class="t " style="left:478.90px;top:574.93px;font-size:16.25px;color:#393939;font-weight:normal;letter-spacing:0.18px">Registration Form - Porsche High Flier Grand Prix Experience</div>
<div class="a" style="left:1146px;top:573px;width:33px;height:25px;background:#82af6f"></div>
<svg class="a" style="left:1155.6px;top:579.5px" width="14" height="11"><use href="#i-check"/></svg>
<div class="t " style="left:1208.10px;top:574.93px;font-size:16.25px;color:#393939;font-weight:normal;letter-spacing:0.17px">12/Jan/2018 8:35 PM</div>
<div class="t " style="left:1442.30px;top:574.93px;font-size:16.25px;color:#393939;font-weight:normal;letter-spacing:0.36px">sang.nguyen@interactivepartners.com.au</div>
<div class="a" style="left:264px;top:602px;width:1610px;height:39px;background:#f9f9f9"></div>
<div class="a" style="left:263px;top:641px;width:1611px;height:1px;background:#e1e1e1"></div>
<div class="a" style="left:394px;top:602px;width:1px;height:39px;background:#e1e1e1"></div>
<div class="a" style="left:473px;top:602px;width:1px;height:39px;background:#e1e1e1"></div>
<div class="a" style="left:1123px;top:602px;width:1px;height:39px;background:#e1e1e1"></div>
<div class="a" style="left:1202px;top:602px;width:1px;height:39px;background:#e1e1e1"></div>
<div class="a" style="left:1436px;top:602px;width:1px;height:39px;background:#e1e1e1"></div>
<svg class="a" style="left:272px;top:619.2px" width="16.5" height="13"><use href="#i-edit"/></svg>
<svg class="a" style="left:292.3px;top:618.0px" width="16.5" height="16.5"><use href="#i-copy"/></svg>
<svg class="a" style="left:312.3px;top:620.8px" width="16.5" height="11"><use href="#i-eye"/></svg>
<svg class="a" style="left:332.3px;top:617.8px" width="18" height="16"><use href="#i-cogs"/></svg>
<svg class="a" style="left:354px;top:621.0px" width="16.5" height="12"><use href="#i-code"/></svg>
<svg class="a" style="left:375.4px;top:621.4px" width="10.8" height="10.8"><use href="#i-x"/></svg>
<div class="t" style="left:394px;width:79px;text-align:center;top:616.83px;font-size:16.25px;color:#393939">26</div>
<div class="t " style="left:478.90px;top:616.83px;font-size:16.25px;color:#393939;font-weight:normal;letter-spacing:0.18px">CompetitionForm</div>
<div class="t " style="left:1208.10px;top:616.83px;font-size:16.25px;color:#393939;font-weight:normal;letter-spacing:0.17px">1/Nov/2018 8:31 AM</div>
<div class="t " style="left:1442.30px;top:616.83px;font-size:16.25px;color:#393939;font-weight:normal;letter-spacing:0.36px">atruscott</div>
<div class="a" style="left:264px;top:642px;width:1610px;height:41px;background:#fff"></div>
<div class="a" style="left:263px;top:683px;width:1611px;height:1px;background:#e1e1e1"></div>
<div class="a" style="left:394px;top:642px;width:1px;height:41px;background:#e1e1e1"></div>
<div class="a" style="left:473px;top:642px;width:1px;height:41px;background:#e1e1e1"></div>
<div class="a" style="left:1123px;top:642px;width:1px;height:41px;background:#e1e1e1"></div>
<div class="a" style="left:1202px;top:642px;width:1px;height:41px;background:#e1e1e1"></div>
<div class="a" style="left:1436px;top:642px;width:1px;height:41px;background:#e1e1e1"></div>
<svg class="a" style="left:272px;top:659.3px" width="16.5" height="13"><use href="#i-edit"/></svg>
<svg class="a" style="left:292.3px;top:658.1px" width="16.5" height="16.5"><use href="#i-copy"/></svg>
<svg class="a" style="left:312.3px;top:660.9px" width="16.5" height="11"><use href="#i-eye"/></svg>
<svg class="a" style="left:332.3px;top:657.9px" width="18" height="16"><use href="#i-cogs"/></svg>
<svg class="a" style="left:354px;top:661.1px" width="16.5" height="12"><use href="#i-code"/></svg>
<svg class="a" style="left:375.4px;top:661.5px" width="10.8" height="10.8"><use href="#i-x"/></svg>
<div class="t" style="left:394px;width:79px;text-align:center;top:656.93px;font-size:16.25px;color:#393939">27</div>
<div class="t " style="left:478.90px;top:656.93px;font-size:16.25px;color:#393939;font-weight:normal;letter-spacing:0.18px">Registration Form - Porsche Pavilion</div>
<div class="a" style="left:1146px;top:655px;width:33px;height:25px;background:#82af6f"></div>
<svg class="a" style="left:1155.6px;top:661.5px" width="14" height="11"><use href="#i-check"/></svg>
<div class="t " style="left:1208.10px;top:656.93px;font-size:16.25px;color:#393939;font-weight:normal;letter-spacing:0.17px">29/Nov/2018 7:33 PM</div>
<div class="t " style="left:1442.30px;top:656.93px;font-size:16.25px;color:#393939;font-weight:normal;letter-spacing:0.36px">renz.dumalag@interactivepartners.com.au</div>
<div class="a" style="left:264px;top:684px;width:1610px;height:41px;background:#f9f9f9"></div>
<div class="a" style="left:263px;top:725px;width:1611px;height:1px;background:#e1e1e1"></div>
<div class="a" style="left:394px;top:684px;width:1px;height:41px;background:#e1e1e1"></div>
<div class="a" style="left:473px;top:684px;width:1px;height:41px;background:#e1e1e1"></div>
<div class="a" style="left:1123px;top:684px;width:1px;height:41px;background:#e1e1e1"></div>
<div class="a" style="left:1202px;top:684px;width:1px;height:41px;background:#e1e1e1"></div>
<div class="a" style="left:1436px;top:684px;width:1px;height:41px;background:#e1e1e1"></div>
<svg class="a" style="left:272px;top:701.3px" width="16.5" height="13"><use href="#i-edit"/></svg>
<svg class="a" style="left:292.3px;top:700.1px" width="16.5" height="16.5"><use href="#i-copy"/></svg>
<svg class="a" style="left:312.3px;top:702.9px" width="16.5" height="11"><use href="#i-eye"/></svg>
<svg class="a" style="left:332.3px;top:699.9px" width="18" height="16"><use href="#i-cogs"/></svg>
<svg class="a" style="left:354px;top:703.1px" width="16.5" height="12"><use href="#i-code"/></svg>
<svg class="a" style="left:375.4px;top:703.5px" width="10.8" height="10.8"><use href="#i-x"/></svg>
<div class="t" style="left:394px;width:79px;text-align:center;top:698.93px;font-size:16.25px;color:#393939">28</div>
<div class="t " style="left:478.90px;top:698.93px;font-size:16.25px;color:#393939;font-weight:normal;letter-spacing:0.18px">Registration Form - Porsche Track Experience</div>
<div class="a" style="left:1146px;top:697px;width:33px;height:25px;background:#82af6f"></div>
<svg class="a" style="left:1155.6px;top:703.5px" width="14" height="11"><use href="#i-check"/></svg>
<div class="t " style="left:1208.10px;top:698.93px;font-size:16.25px;color:#393939;font-weight:normal;letter-spacing:0.17px">11/Dec/2019 4:18 PM</div>
<div class="t " style="left:1442.30px;top:698.93px;font-size:16.25px;color:#393939;font-weight:normal;letter-spacing:0.36px">Lexie.Fisher@porsche.com.au</div>
<div class="a" style="left:264px;top:726px;width:1610px;height:41px;background:#fff"></div>
<div class="a" style="left:263px;top:767px;width:1611px;height:1px;background:#e1e1e1"></div>
<div class="a" style="left:394px;top:726px;width:1px;height:41px;background:#e1e1e1"></div>
<div class="a" style="left:473px;top:726px;width:1px;height:41px;background:#e1e1e1"></div>
<div class="a" style="left:1123px;top:726px;width:1px;height:41px;background:#e1e1e1"></div>
<div class="a" style="left:1202px;top:726px;width:1px;height:41px;background:#e1e1e1"></div>
<div class="a" style="left:1436px;top:726px;width:1px;height:41px;background:#e1e1e1"></div>
<svg class="a" style="left:272px;top:743.3px" width="16.5" height="13"><use href="#i-edit"/></svg>
<svg class="a" style="left:292.3px;top:742.1px" width="16.5" height="16.5"><use href="#i-copy"/></svg>
<svg class="a" style="left:312.3px;top:744.9px" width="16.5" height="11"><use href="#i-eye"/></svg>
<svg class="a" style="left:332.3px;top:741.9px" width="18" height="16"><use href="#i-cogs"/></svg>
<svg class="a" style="left:354px;top:745.1px" width="16.5" height="12"><use href="#i-code"/></svg>
<svg class="a" style="left:375.4px;top:745.5px" width="10.8" height="10.8"><use href="#i-x"/></svg>
<div class="t" style="left:394px;width:79px;text-align:center;top:740.93px;font-size:16.25px;color:#393939">29</div>
<div class="t " style="left:478.90px;top:740.93px;font-size:16.25px;color:#393939;font-weight:normal;letter-spacing:0.18px">Registration Form - Pole Position Bathurst 2018 Packages</div>
<div class="a" style="left:1146px;top:739px;width:33px;height:25px;background:#82af6f"></div>
<svg class="a" style="left:1155.6px;top:745.5px" width="14" height="11"><use href="#i-check"/></svg>
<div class="t " style="left:1208.10px;top:740.93px;font-size:16.25px;color:#393939;font-weight:normal;letter-spacing:0.17px">29/Nov/2018 7:24 PM</div>
<div class="t " style="left:1442.30px;top:740.93px;font-size:16.25px;color:#393939;font-weight:normal;letter-spacing:0.36px">renz.dumalag@interactivepartners.com.au</div>
<div class="a" style="left:264px;top:768px;width:1610px;height:41px;background:#f9f9f9"></div>
<div class="a" style="left:263px;top:809px;width:1611px;height:1px;background:#e1e1e1"></div>
<div class="a" style="left:394px;top:768px;width:1px;height:41px;background:#e1e1e1"></div>
<div class="a" style="left:473px;top:768px;width:1px;height:41px;background:#e1e1e1"></div>
<div class="a" style="left:1123px;top:768px;width:1px;height:41px;background:#e1e1e1"></div>
<div class="a" style="left:1202px;top:768px;width:1px;height:41px;background:#e1e1e1"></div>
<div class="a" style="left:1436px;top:768px;width:1px;height:41px;background:#e1e1e1"></div>
<svg class="a" style="left:272px;top:785.3px" width="16.5" height="13"><use href="#i-edit"/></svg>
<svg class="a" style="left:292.3px;top:784.1px" width="16.5" height="16.5"><use href="#i-copy"/></svg>
<svg class="a" style="left:312.3px;top:786.9px" width="16.5" height="11"><use href="#i-eye"/></svg>
<svg class="a" style="left:332.3px;top:783.9px" width="18" height="16"><use href="#i-cogs"/></svg>
<svg class="a" style="left:354px;top:787.1px" width="16.5" height="12"><use href="#i-code"/></svg>
<svg class="a" style="left:375.4px;top:787.5px" width="10.8" height="10.8"><use href="#i-x"/></svg>
<div class="t" style="left:394px;width:79px;text-align:center;top:782.93px;font-size:16.25px;color:#393939">31</div>
<div class="t " style="left:478.90px;top:782.93px;font-size:16.25px;color:#393939;font-weight:normal;letter-spacing:0.18px">Registration Form - Porsche Track Experience Precision</div>
<div class="a" style="left:1146px;top:781px;width:33px;height:25px;background:#82af6f"></div>
<svg class="a" style="left:1155.6px;top:787.5px" width="14" height="11"><use href="#i-check"/></svg>
<div class="t " style="left:1208.10px;top:782.93px;font-size:16.25px;color:#393939;font-weight:normal;letter-spacing:0.17px">5/Jun/2019 6:05 PM</div>
<div class="t " style="left:1442.30px;top:782.93px;font-size:16.25px;color:#393939;font-weight:normal;letter-spacing:0.36px">eringribben</div>
<div class="a" style="left:264px;top:810px;width:1610px;height:41px;background:#fff"></div>
<div class="a" style="left:263px;top:851px;width:1611px;height:1px;background:#e1e1e1"></div>
<div class="a" style="left:394px;top:810px;width:1px;height:41px;background:#e1e1e1"></div>
<div class="a" style="left:473px;top:810px;width:1px;height:41px;background:#e1e1e1"></div>
<div class="a" style="left:1123px;top:810px;width:1px;height:41px;background:#e1e1e1"></div>
<div class="a" style="left:1202px;top:810px;width:1px;height:41px;background:#e1e1e1"></div>
<div class="a" style="left:1436px;top:810px;width:1px;height:41px;background:#e1e1e1"></div>
<svg class="a" style="left:272px;top:827.3px" width="16.5" height="13"><use href="#i-edit"/></svg>
<svg class="a" style="left:292.3px;top:826.1px" width="16.5" height="16.5"><use href="#i-copy"/></svg>
<svg class="a" style="left:312.3px;top:828.9px" width="16.5" height="11"><use href="#i-eye"/></svg>
<svg class="a" style="left:332.3px;top:825.9px" width="18" height="16"><use href="#i-cogs"/></svg>
<svg class="a" style="left:354px;top:829.1px" width="16.5" height="12"><use href="#i-code"/></svg>
<svg class="a" style="left:375.4px;top:829.5px" width="10.8" height="10.8"><use href="#i-x"/></svg>
<div class="t" style="left:394px;width:79px;text-align:center;top:824.93px;font-size:16.25px;color:#393939">36</div>
<div class="t " style="left:478.90px;top:824.93px;font-size:16.25px;color:#393939;font-weight:normal;letter-spacing:0.18px">Registration Form - Porsche Track Experience Precision Plus</div>
<div class="a" style="left:1146px;top:823px;width:33px;height:25px;background:#82af6f"></div>
<svg class="a" style="left:1155.6px;top:829.5px" width="14" height="11"><use href="#i-check"/></svg>
<div class="t " style="left:1208.10px;top:824.93px;font-size:16.25px;color:#393939;font-weight:normal;letter-spacing:0.17px">29/Nov/2018 7:01 PM</div>
<div class="t " style="left:1442.30px;top:824.93px;font-size:16.25px;color:#393939;font-weight:normal;letter-spacing:0.36px">renz.dumalag@interactivepartners.com.au</div>
<div class="a" style="left:264px;top:852px;width:1610px;height:41px;background:#f9f9f9"></div>
<div class="a" style="left:263px;top:893px;width:1611px;height:1px;background:#e1e1e1"></div>
<div class="a" style="left:394px;top:852px;width:1px;height:41px;background:#e1e1e1"></div>
<div class="a" style="left:473px;top:852px;width:1px;height:41px;background:#e1e1e1"></div>
<div class="a" style="left:1123px;top:852px;width:1px;height:41px;background:#e1e1e1"></div>
<div class="a" style="left:1202px;top:852px;width:1px;height:41px;background:#e1e1e1"></div>
<div class="a" style="left:1436px;top:852px;width:1px;height:41px;background:#e1e1e1"></div>
<svg class="a" style="left:272px;top:869.3px" width="16.5" height="13"><use href="#i-edit"/></svg>
<svg class="a" style="left:292.3px;top:868.1px" width="16.5" height="16.5"><use href="#i-copy"/></svg>
<svg class="a" style="left:312.3px;top:870.9px" width="16.5" height="11"><use href="#i-eye"/></svg>
<svg class="a" style="left:332.3px;top:867.9px" width="18" height="16"><use href="#i-cogs"/></svg>
<svg class="a" style="left:354px;top:871.1px" width="16.5" height="12"><use href="#i-code"/></svg>
<svg class="a" style="left:375.4px;top:871.5px" width="10.8" height="10.8"><use href="#i-x"/></svg>
<div class="t" style="left:394px;width:79px;text-align:center;top:866.93px;font-size:16.25px;color:#393939">37</div>
<div class="t " style="left:478.90px;top:866.93px;font-size:16.25px;color:#393939;font-weight:normal;letter-spacing:0.18px">Registration Form - Porsche Track Experience Performance</div>
<div class="a" style="left:1146px;top:865px;width:33px;height:25px;background:#82af6f"></div>
<svg class="a" style="left:1155.6px;top:871.5px" width="14" height="11"><use href="#i-check"/></svg>
<div class="t " style="left:1208.10px;top:866.93px;font-size:16.25px;color:#393939;font-weight:normal;letter-spacing:0.17px">29/Nov/2018 7:03 PM</div>
<div class="t " style="left:1442.30px;top:866.93px;font-size:16.25px;color:#393939;font-weight:normal;letter-spacing:0.36px">renz.dumalag@interactivepartners.com.au</div>
<div class="a" style="left:277px;top:487px;width:170px;height:33px;background:rgba(0,0,0,0.1)"></div>
<svg class="a" style="left:356px;top:520px" width="13" height="6.5"><path d="M0 0H13L6.5 6.5z" fill="rgba(0,0,0,0.1)"/></svg>
<div class="t " style="left:287.80px;top:493.13px;font-size:16.25px;color:rgba(255,255,255,0.75);font-weight:normal;letter-spacing:-0.45px">Get Embedded Script</div>
<svg class="a" style="left:272px;top:493.3px" width="16.5" height="13"><use href="#i-edit"/></svg>
<svg class="a" style="left:292.3px;top:492.1px" width="16.5" height="16.5"><use href="#i-copy"/></svg>
<svg class="a" style="left:312.3px;top:494.9px" width="16.5" height="11"><use href="#i-eye"/></svg>
<svg class="a" style="left:332.3px;top:491.9px" width="18" height="16"><use href="#i-cogs"/></svg>
<svg class="a" style="left:354px;top:495.1px" width="16.5" height="12"><use href="#i-code"/></svg>
<svg class="a" style="left:375.4px;top:495.5px" width="10.8" height="10.8"><use href="#i-x"/></svg>
<div class="t" style="left:394px;width:79px;text-align:center;top:490.93px;font-size:16.25px;color:#393939">20</div>
<svg class="a" style="left:0;top:0" width="1920" height="897"><defs><filter id="sh" x="-20%" y="-20%" width="140%" height="140%"><feGaussianBlur stdDeviation="1.6"/></filter></defs><g transform="translate(2.5,3)" filter="url(#sh)" opacity="0.55"><line x1="402.1" y1="292.5" x2="302.0" y2="389.9" stroke="#333" stroke-width="5.5" stroke-linecap="butt"/><polygon points="283.4,408.0 295.4,380.2 311.5,396.7" fill="#333"/><line x1="439.7" y1="737.2" x2="207.4" y2="578.6" stroke="#333" stroke-width="5.5" stroke-linecap="butt"/><polygon points="183.4,562.3 215.5,570.3 202.5,589.3" fill="#333"/></g><g><line x1="402.1" y1="292.5" x2="302.0" y2="389.9" stroke="#ff0000" stroke-width="5.5" stroke-linecap="butt"/><polygon points="283.4,408.0 295.4,380.2 311.5,396.7" fill="#ff0000"/><line x1="439.7" y1="737.2" x2="207.4" y2="578.6" stroke="#ff0000" stroke-width="5.5" stroke-linecap="butt"/><polygon points="183.4,562.3 215.5,570.3 202.5,589.3" fill="#ff0000"/></g></svg>
<svg class="a" style="left:254px;top:424px;" width="21" height="26" viewBox="0 0 21 26"><path d="M7.4 15.2V3.2c0-1.2 0.8-2 1.8-2s1.8 0.8 1.8 2v7.4c0.3-0.9 1-1.4 1.8-1.4 1 0 1.6 0.7 1.7 1.5 0.3-0.7 1-1.1 1.7-1.1 1 0 1.7 0.8 1.7 1.8v6.4c0 4.6-2.8 7.6-6.8 7.6-2.6 0-4.2-1-5.6-2.8L1.4 17.8c-0.7-0.9-0.6-2 0.2-2.6 0.8-0.6 1.8-0.4 2.6 0.4z" fill="#fff" stroke="#111" stroke-width="1.5" stroke-linejoin="round"/><path d="M11 10.6V15M14.3 10.9V15M17.6 11V15" stroke="#111" stroke-width="1.2"/></svg>
<div class="a" style="left:1899px;top:0px;width:21px;height:895px;background:#f1f1f1"></div>
<div class="a" style="left:1901px;top:16px;width:17px;height:300px;background:#c1c1c1"></div>
<svg class="a" style="left:1905px;top:4px;" width="10" height="6" viewBox="0 0 10 6"><path d="M0 5.5H9.5L4.75 0.5z" fill="#a3a3a3"/></svg>
<svg class="a" style="left:1905px;top:884px;" width="10" height="6" viewBox="0 0 10 6"><path d="M0 0.5H9.5L4.75 5.5z" fill="#505050"/></svg>
<div class="a" style="left:0px;top:896px;width:1920px;height:1px;background:#5a1040"></div>
</body></html>
